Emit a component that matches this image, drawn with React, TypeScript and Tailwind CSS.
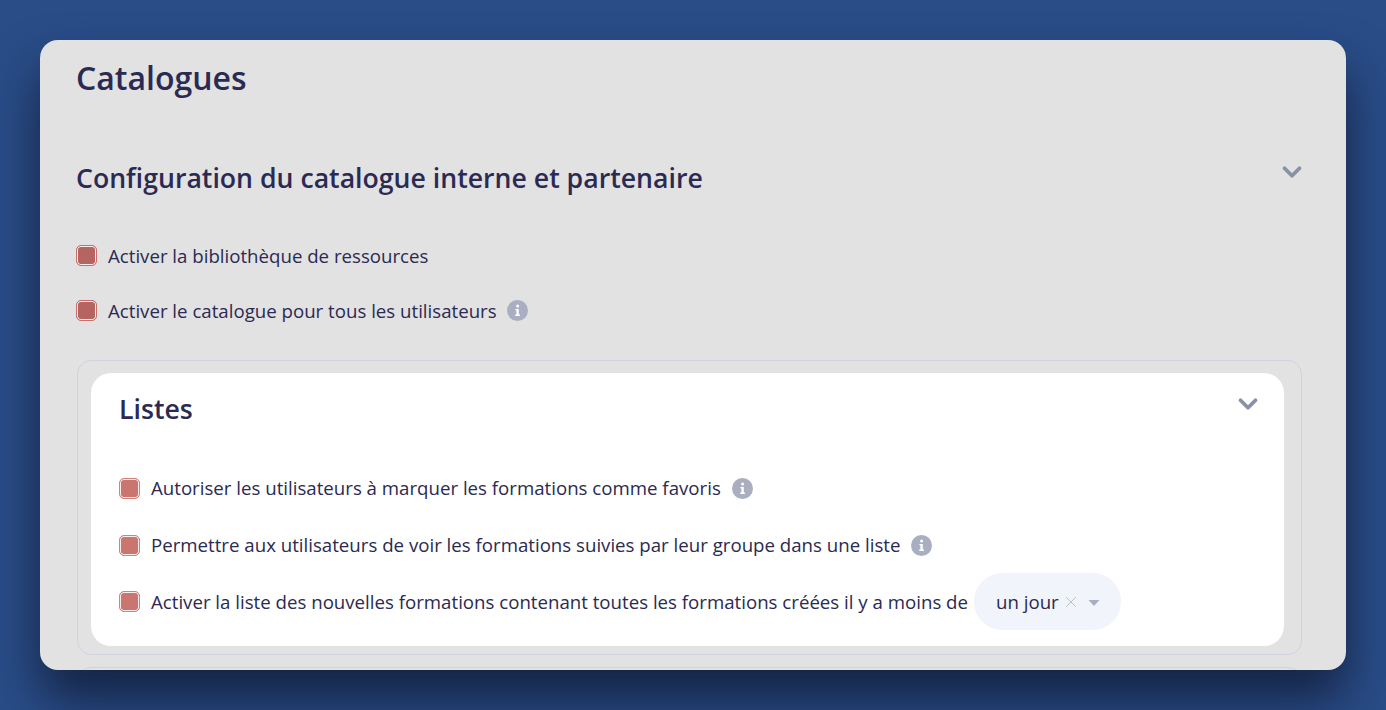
import { ChevronDown, X } from 'lucide-react';

function InfoIcon() {
  return (
    <svg width="21" height="21" viewBox="0 0 21 21" className="shrink-0">
      <circle cx="10.5" cy="10.5" r="10.5" fill="#a9afc0" />
      <circle cx="10.6" cy="5.9" r="1.5" fill="#fff" />
      <path d="M8.4 8.9h3.4v5.6h1.1v1.4H8.2v-1.4h1.2v-4.2h-1z" fill="#fff" />
    </svg>
  );
}

function Check({ light }: { light?: boolean }) {
  return (
    <span
      className={
        'box-border block w-[21px] h-[21px] shrink-0 rounded-[5px] border shadow-[inset_0_0_0_1px_#f8eeed] ' +
        (light ? 'border-[#d5817c] bg-[#cb7571]' : 'border-[#c9706c] bg-[#b56461]')
      }
    />
  );
}

function Option({ label, info, light, className }: { label: string; info?: boolean; light?: boolean; className?: string }) {
  return (
    <div className={'flex items-center ' + (className ?? '')}>
      <Check light={light} />
      <span className={'ml-[11px] text-[18.67px] leading-[24px] text-[#2a2a52] ' + (light ? '' : 'mt-px -mb-px')}>{label}</span>
      {info && (
        <span className={light ? 'ml-[11px]' : 'ml-[10px] mt-px'}>
          <InfoIcon />
        </span>
      )}
    </div>
  );
}

const Chevron = ({ className }: { className?: string }) => (
  <ChevronDown size={30} strokeWidth={3} className={'text-[#8792a6] ' + (className ?? '')} />
);

export default function App() {
  return (
    <div
      className="h-[710px] overflow-hidden bg-[#2a4d88] pt-[40px] px-[40px]"
      style={{ fontFamily: '"Open Sans", "Noto Sans", sans-serif' }}
    >
      <div className="h-[630px] overflow-hidden rounded-[18px] bg-[#e2e2e2] pl-[36px] pr-[44px] shadow-[0_30px_50px_0_rgba(15,25,50,0.8)]">
        <h1 className="pt-[17px] text-[32px] leading-[42px] font-semibold text-[#2a2a52]">Catalogues</h1>

        <div className="mt-[60px] flex items-start justify-between">
          <h2 className="text-[26.67px] leading-[38px] font-semibold text-[#2a2a52]">
            Configuration du catalogue interne et partenaire
          </h2>
          <Chevron className="mr-[-5px] mt-[-2px]" />
        </div>

        <Option className="mt-[46px]" label="Activer la bibliothèque de ressources" />
        <Option className="mt-[31px]" label="Activer le catalogue pour tous les utilisateurs" info />

        <div className="mt-[38px] ml-px h-[295px] rounded-[14px] border border-[#cfd2e0] pl-[13px] pr-[17px] pt-[12px]">
          <div className="h-[273px] rounded-[20px] bg-white pl-[28px] pr-[22px]">
            <div className="flex items-start justify-between pt-[18px]">
              <h3 className="text-[26.67px] leading-[36px] font-semibold text-[#2a2a52]">Listes</h3>
              <Chevron className="mr-[-1px] mt-[-2px]" />
            </div>
            <Option light className="mt-[49px]" label="Autoriser les utilisateurs à marquer les formations comme favoris" info />
            <Option
              light
              className="mt-[33px]"
              label="Permettre aux utilisateurs de voir les formations suivies par leur groupe dans une liste"
              info
            />
            <div className="mt-[16px] flex items-center">
              <Check light />
              <span className="ml-[11px] text-[18.67px] leading-[24px] text-[#2a2a52]">
                Activer la liste des nouvelles formations contenant toutes les formations créées il y a moins de
              </span>
              <div className="ml-[6px] flex h-[57px] w-[147px] items-center rounded-[28px] bg-[#f1f4fa] pl-[22px] text-[18.67px] text-[#2a2a52]">
                <span>un jour</span>
                <X size={18} strokeWidth={1.25} className="ml-[3px] text-[#b9bdc9]" />
                <svg width="12" height="6" viewBox="0 0 12 6" className="ml-[8px] mt-[2px]">
                  <path d="M0.5 0h11L6 6z" fill="#a9afc0" />
                </svg>
              </div>
            </div>
          </div>
        </div>

        <div className="mt-[12px] ml-px h-[40px] rounded-[14px] border border-[#cfd2e0]" />
      </div>
    </div>
  );
}
